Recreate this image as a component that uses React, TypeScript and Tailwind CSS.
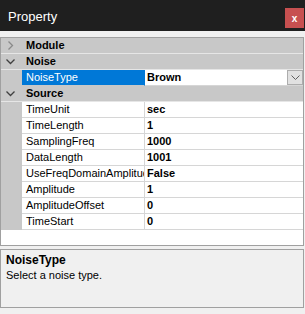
import React from 'react';

type Item =
  | { kind: 'cat'; label: string; open: boolean }
  | { kind: 'prop'; name: string; value: string; selected?: boolean; dropdown?: boolean };

const items: Item[] = [
  { kind: 'cat', label: 'Module', open: false },
  { kind: 'cat', label: 'Noise', open: true },
  { kind: 'prop', name: 'NoiseType', value: 'Brown', selected: true, dropdown: true },
  { kind: 'cat', label: 'Source', open: true },
  { kind: 'prop', name: 'TimeUnit', value: 'sec' },
  { kind: 'prop', name: 'TimeLength', value: '1' },
  { kind: 'prop', name: 'SamplingFreq', value: '1000' },
  { kind: 'prop', name: 'DataLength', value: '1001' },
  { kind: 'prop', name: 'UseFreqDomainAmplitude', value: 'False' },
  { kind: 'prop', name: 'Amplitude', value: '1' },
  { kind: 'prop', name: 'AmplitudeOffset', value: '0' },
  { kind: 'prop', name: 'TimeStart', value: '0' },
];

const Expander: React.FC<{ open: boolean }> = ({ open }) =>
  open ? (
    <svg width="9" height="6" viewBox="0 0 9 6" className="ml-[5px]">
      <path d="M0.5 0.5 L4.5 4.5 L8.5 0.5" fill="none" stroke="#404040" strokeWidth="1.3" />
    </svg>
  ) : (
    <svg width="6" height="9" viewBox="0 0 6 9" className="ml-[7px]">
      <path d="M0.5 0.5 L4.5 4.5 L0.5 8.5" fill="none" stroke="#8a8a8a" strokeWidth="1.3" />
    </svg>
  );

const App: React.FC = () => {
  return (
    <div className="w-[305px] h-[314px] bg-[#f0f0f0] font-['Liberation_Sans',Arial,sans-serif] text-[11px] text-black flex flex-col overflow-hidden">
      {/* title bar */}
      <div className="h-[31px] bg-[#1f1f1f] flex items-start justify-between shrink-0">
        <span className="text-white text-[13px] ml-[8px] mt-[7px]">Property</span>
        <div className="w-[19px] h-[20px] mt-[8px] mr-[1px] bg-[#c75050] text-white text-[10px] font-bold flex items-center justify-center">
          x
        </div>
      </div>

      {/* grid */}
      <div className="mt-[6px] w-[304px] h-[209px] border border-[#a0a0a0] bg-white shrink-0 flex flex-col overflow-hidden">
        {items.map((it, i) =>
          it.kind === 'cat' ? (
            <div key={i} className="h-[16px] shrink-0 flex items-center bg-[#c8c8c8] border-b border-[#e6e6e6]">
              <div className="w-[21px] flex items-center">
                <Expander open={it.open} />
              </div>
              <span className="ml-[4px] font-bold leading-none">{it.label}</span>
            </div>
          ) : (
            <div key={i} className="h-[16px] shrink-0 flex">
              <div className="w-[21px] bg-[#c8c8c8]" />
              <div
                className={
                  'w-[123px] pl-[4px] flex items-center whitespace-nowrap overflow-hidden border-b border-r ' +
                  (it.selected ? 'bg-[#0078d7] text-white border-b-[#c8c8c8] border-r-[#0078d7]' : 'border-[#d6d6d6]')
                }
              >
                <span className="leading-none">{it.name}</span>
              </div>
              <div className="flex-1 flex items-center border-b border-[#d6d6d6] pl-[2px] relative">
                <span className="font-bold leading-none">{it.value}</span>
                {it.dropdown && (
                  <div className="absolute right-0 top-0 w-[16px] h-[15px] bg-[#e1e1e1] border border-[#adadad] flex items-center justify-center">
                    <svg width="9" height="5" viewBox="0 0 9 5">
                      <path d="M0.5 0.5 L4.5 4.5 L8.5 0.5" fill="none" stroke="#606060" strokeWidth="1" />
                    </svg>
                  </div>
                )}
              </div>
            </div>
          )
        )}
      </div>

      {/* description */}
      <div className="mt-[3px] w-[304px] h-[59px] border border-[#a0a0a0] bg-[#f0f0f0] shrink-0 px-[5px] pt-[3px]">
        <div className="font-bold text-[12px] leading-[14px]">NoiseType</div>
        <div className="text-[11px] leading-[14px] mt-[1px]">Select a noise type.</div>
      </div>
    </div>
  );
};

export default App;
